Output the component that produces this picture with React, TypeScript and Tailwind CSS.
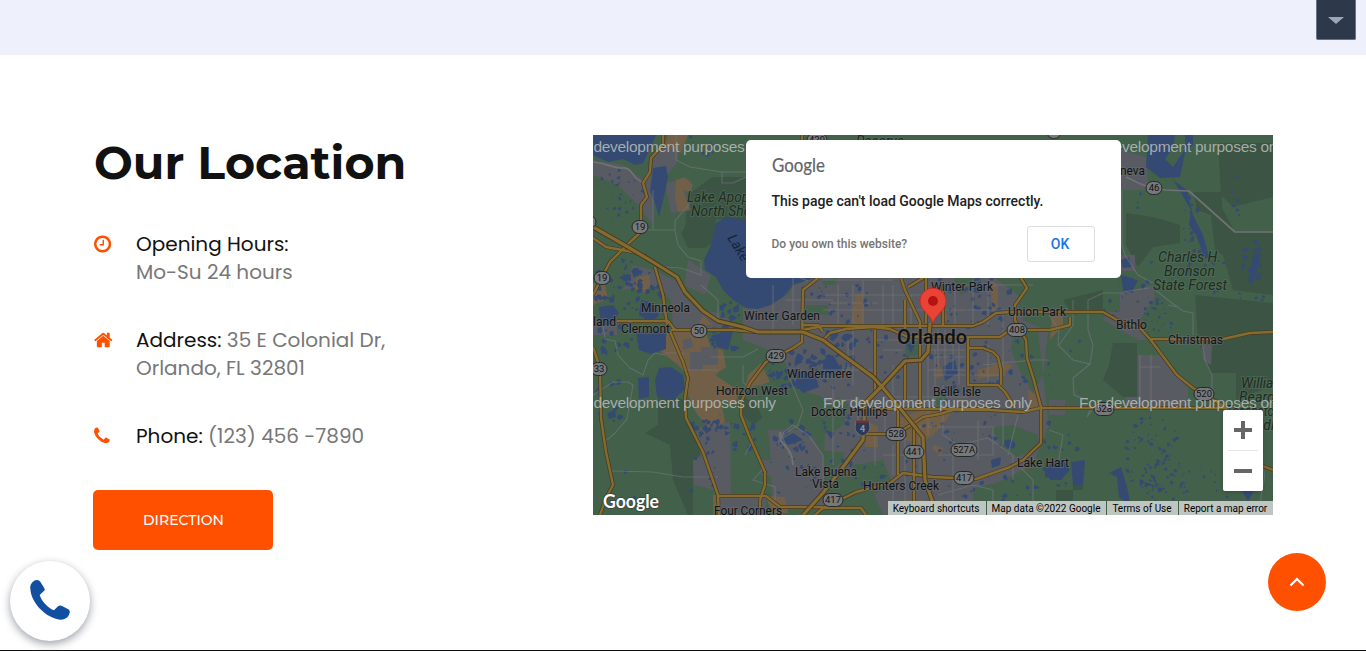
import type { ReactNode } from "react";

const BLUE = "#344a73";
const GREEN = "#43604b";
const DARK = "#3c5444";
const GRAY = "#595b62";
const SAND = "#715f47";

const ICONS = {
  clock:
    "M896 544v448q0 14-9 23t-23 9h-320q-14 0-23-9t-9-23v-64q0-14 9-23t23-9h224v-352q0-14 9-23t23-9h64q14 0 23 9t9 23zm416 352q0-148-73-273t-198-198-273-73-273 73-198 198-73 273 73 273 198 198 273 73 273-73 198-198 73-273zm224 0q0 209-103 385.5t-279.5 279.5-385.5 103-385.5-103-279.5-279.5-103-385.5 103-385.5 279.5-279.5 385.5-103 385.5 103 279.5 279.5 103 385.5z",
  home: "M1408 992v480q0 26-19 45t-45 19h-384v-384h-256v384h-384q-26 0-45-19t-19-45v-480q0-1 .5-3t.5-3l575-474 575 474q1 2 1 6zm223-69l-62 74q-8 9-21 11h-3q-13 0-21-7l-692-577-692 577q-12 8-24 7-13-2-21-11l-62-74q-8-10-7-23.5t11-21.5l719-599q32-26 76-26t76 26l244 204v-195q0-14 9-23t23-9h192q14 0 23 9t9 23v408l219 182q10 8 11 21.5t-7 23.5z",
  phone:
    "M1408 1240q0 27-10 70.5t-21 68.5q-21 50-122 106-94 51-186 51-27 0-53-3.5t-57.5-12.5-47-14.5-55.5-20.5-49-18q-98-35-175-83-127-79-264-216t-216-264q-48-77-83-175-3-9-18-49t-20.5-55.5-14.5-47-12.5-57.5-3.5-53q0-92 51-186 56-101 106-122 25-11 68.5-21t70.5-10q14 0 21 3 18 6 53 76 11 19 30 54t35 63.5 31 53.5q3 4 17.5 25t21.5 35.5 7 28.5q0 20-28.5 50t-62 55-62 53-28.5 46q0 9 5 22.5t8.5 20.5 14 24 11.5 19q76 137 174 235t235 174q2 1 19 11.5t24 14 20.5 8.5 22.5 5q18 0 46-28.5t53-62 55-62 50-28.5q14 0 28.5 7t35.5 21.5 25 17.5q25 15 53.5 31t63.5 35 54 30q70 35 76 53 3 7 3 21z",
};

// cx, cy, rx, ry, count, size
const PONDS: [number, number, number, number, number, number][] = [
  [30, 60, 28, 26, 34, 1.4], [25, 150, 25, 30, 32, 2.4], [45, 150, 30, 28, 22, 2.6],
  [20, 205, 22, 18, 14, 2.6], [20, 265, 18, 22, 12, 2.4], [130, 205, 14, 14, 14, 3],
  [120, 292, 24, 8, 26, 2.2], [120, 315, 18, 40, 18, 1.4], [150, 300, 14, 18, 12, 2.2],
  [200, 235, 26, 24, 30, 3], [205, 300, 24, 24, 18, 2.5], [200, 340, 34, 20, 14, 1.8],
  [255, 180, 28, 38, 24, 2], [245, 225, 18, 34, 24, 3], [300, 215, 30, 30, 18, 2],
  [360, 230, 26, 45, 34, 2.3], [385, 165, 36, 28, 28, 2.4], [350, 160, 14, 20, 8, 2.4],
  [415, 225, 26, 36, 20, 1.9], [250, 300, 24, 34, 22, 2], [290, 330, 34, 28, 18, 1.6],
  [370, 300, 46, 28, 26, 1.7], [400, 355, 48, 18, 18, 2], [468, 315, 22, 44, 16, 1.8],
  [475, 235, 20, 50, 12, 1.3], [565, 182, 14, 30, 36, 1.3], [530, 170, 24, 26, 12, 1.6],
  [560, 320, 28, 42, 76, 1.6], [575, 350, 28, 26, 44, 1.3], [600, 100, 10, 46, 34, 1.9],
  [645, 60, 6, 22, 10, 1.5], [660, 125, 12, 24, 18, 2.4], [625, 140, 16, 18, 8, 1.5],
  [550, 140, 24, 14, 8, 1.5], [660, 160, 14, 10, 8, 1.6], [610, 350, 30, 24, 14, 1.3],
  [80, 340, 60, 34, 8, 2], [105, 12, 20, 12, 10, 1.4], [140, 175, 12, 10, 8, 3],
  [545, 60, 8, 16, 6, 1.3], [220, 155, 14, 10, 10, 1.8],
];

function scatter(): string {
  let seed = 77;
  const rnd = () => {
    seed = (seed * 16807) % 2147483647;
    return seed / 2147483647;
  };
  let d = "";
  for (const [cx, cy, rx, ry, n, s] of PONDS) {
    for (let i = 0; i < n; i++) {
      const a = rnd() * Math.PI * 2;
      const r = Math.sqrt(rnd());
      const x = cx + Math.cos(a) * rx * r;
      const y = cy + Math.sin(a) * ry * r;
      const k = s * (0.4 + rnd() * 1.1);
      for (let j = 0; j < 6; j++) {
        const b = (j / 6) * Math.PI * 2;
        const q = k * (0.45 + rnd() * 0.9);
        d += (j ? "L" : "M") + (x + Math.cos(b) * q).toFixed(1) + " " + (y + Math.sin(b) * q).toFixed(1);
      }
      d += "Z";
    }
  }
  return d;
}
const PONDS_PATH = scatter();

const MINOR = [
  "M83 0V25L97 32L129 37V48H140L153 42", "M129 37H153",
  "M60 55V95M48 95H82L85 110L95 122L108 126V140L88 133L70 132", "M82 95V86L97 68", "M108 150L125 165V185",
  "M10 190L12 204L22 206L25 220L37 233L50 240L55 225L62 218L72 220", "M0 260L20 247H35L40 250L38 262L34 284L22 298L14 305",
  "M18 336L60 337L90 342H125", "M72 218H90V235H125M118 222H150L165 214", "M150 230V247L162 260M195 240L210 275L205 290L190 300L185 310",
  "M187 297L195 315L200 330M187 300L200 290L215 300L230 320V350", "M152 320L160 305L150 290", "M170 334L160 345L182 352V372",
  "M230 145H300M230 160H330M230 175H420M260 150V250M300 150V195M270 145V190M245 150V190M237 168H285M290 150V190M318 160V190M362 150V190",
  "M335 207H372M335 215H372M340 222H372M345 195V230M352 195V240M360 200V235M366 200V250M335 235H375M340 240H412",
  "M230 235H282M240 250V330M255 205V240M230 265H270M300 230V275M290 262H375M335 255V300M350 250V300M335 195V290M342 215V270M375 265V275",
  "M335 292H400V320H345M350 300L365 310L395 303L420 320V345M385 285V325M410 278V310M425 280L415 320M360 320V375M345 360L380 350L400 355V380",
  "M300 310V340M282 300V330M312 300V378M327 290V340M290 320H320M292 278V300M300 355V380M282 205H327M290 215H310M265 262V300M395 210V250",
  "M380 145V190M395 150V190M345 150H440M410 180V235M390 230L440 225H456",
  "M456 180L466 195L465 210L480 225L497 229L500 210L495 195V165L510 158H530", "M480 165V190L466 210M497 229L480 243L481 260L495 265",
  "M530 157L555 153M560 153L575 165L590 176L600 178V200M609 205L612 225L619 240V262M575 170L585 172",
  "M547 220V270M558 220V270M547 232H567", "M497 275L494 282L500 274", "M529 55V110L532 120L545 140L560 148",
  "M670 331C675 350 665 350 668 380", "M200 190V140L215 146M180 150V200M192 165H240", "M425 330L440 345V380M456 295L470 300L465 330",
];

const ARTERIAL = ["M0 27C15 28 20 34 30 33S40 46 50 47", "M533 42L550 50L572 55L596 56L642 97H680", "M187 297C185 312 200 310 200 330"];

const MAJOR = [
  "M62 132L70 160L74 190", "M70 0V10L58 23L57 37L50 48L54 62L48 70V97L37 107L17 127L10 140L0 160", "M0 103L13 112L40 117L55 122",
  "M24 186H75L82 195", "M78 195H140L165 197H200L230 191H380L390 187L403 178L417 177H510L524 185L547 193L557 204H630L657 198L680 197",
  "M209 0V5M225 143L210 155L209 207L200 213L187 220L173 227L157 248L148 267V280L157 303L172 337V350L167 365V380",
  "M77 196L90 227L95 243L92 263L93 283L110 317L125 360L126 380", "M0 212L7 233L8 283L13 317L20 350L13 363L7 380",
  "M125 361H173L187 372H230", "M230 205L237 198L253 194L280 192L297 194L315 202H407L417 195L457 195L477 190V182",
  "M282 195V258", "M312 165V195M312 225V265", "M305 275V340", "M321 290V380", "M350 150V190", "M375 202V250H405L412 257L422 273",
  "M375 213H390L400 217L405 222L408 235V250", "M308 143L312 155L327 187V275", "M333 143V188", "M315 152L325 146L330 143", "M263 274H397",
  "M557 204L584 240L600 253L624 267L634 274", "M670 331L680 335", "M230 197L225 190L209 190",
  "M428 143L434 153L422 170V185L427 195L433 205L434 223L440 242L448 272V308L430 325L417 332L383 344L340 342L310 338L297 348L263 357L253 362L230 373L222 380",
  "M270 299H303L318 290L330 282L347 279L360 275H397L430 277L447 273H634", "M230 373H268L273 380",
];
const HIGHWAY = [
  "M0 92L35 112L60 127L84 142L92 157L110 176L125 186L150 192L165 197L210 197L230 205L250 220L280 242L290 253L310 277L330 302L332 345L340 368L345 380",
  "M337 188L335 217L328 225L312 226L288 252L272 268L270 305L250 332L230 358L210 380",
];

type LabelSpec = [string, number, number, number];
const LABELS: LabelSpec[] = [
  ["Minneola", 48, 176.5, 49], ["Clermont", 28, 197.5, 49], ["Winter Garden", 151, 184.5, 76], ["land", 0, 190.5, 23],
  ["Horizon West", 123, 259.5, 72], ["Windermere", 194, 242.5, 65], ["Winter Park", 338, 155.5, 62], ["Union Park", 415, 180.5, 58],
  ["Bithlo", 523, 193.5, 31], ["Christmas", 575, 208.5, 55], ["Belle Isle", 340, 260.5, 48], ["Doctor Phillips", 218, 280.5, 77],
  ["Lake Buena", 202, 340.5, 62], ["Vista", 219, 352.5, 27], ["Hunters Creek", 270, 354.5, 76], ["Lake Hart", 424, 331.5, 52],
  ["Four Corners", 121, 379.5, 68], ["neva", 527, 39.5, 25],
];
const PARKS: LabelSpec[] = [
  ["Lake Apopka", 94, 66.5, 76], ["North Shore", 98, 80.5, 72], ["Reserve", 263, 10.5, 48], ["Charles H.", 565, 126.5, 63],
  ["Bronson", 571, 140.5, 51], ["State Forest", 560, 154.5, 74], ["William", 648, 252.5, 44], ["Beardall", 646, 266.5, 50],
  ["Tosohatchee", 633, 280.5, 66], ["Wildlife", 652, 294.5, 44],
];
const SHIELDS: [string, number, number, number][] = [
  ["19", 47, 92, 16], ["19", 9, 143, 16], ["33", 6, 234, 16], ["50", 106, 196, 16], ["429", 183, 221, 20], ["429", 224, 5, 20],
  ["408", 424, 195, 20], ["528", 303, 299, 20], ["441", 321, 317, 20], ["527A", 371, 315, 26], ["417", 371, 343, 20],
  ["417", 240, 365, 20], ["520", 611, 259, 20], ["528", 511, 274, 20], ["46", 561, 53, 16], ["", 461, -3, 14], ["", -5, 87, 16],
];

function Labels({ items, italic = false }: { items: LabelSpec[]; italic?: boolean }) {
  return (
    <g
      fontFamily="Roboto, sans-serif"
      fontSize={italic ? 14 : 12.4}
      fontStyle={italic ? "italic" : "normal"}
      fill={italic ? "#202b23" : "#111214"}
      stroke={italic ? "#56705d" : "#6b6d70"}
      strokeOpacity={0.6}
      strokeWidth={2}
      paintOrder="stroke"
    >
      {items.map(([t, x, y, w]) => (
        <text key={t} x={x} y={y} textLength={w} lengthAdjust="spacingAndGlyphs">{t}</text>
      ))}
    </g>
  );
}

function MapCanvas() {
  return (
    <svg className="block h-[380px] w-[680px]" viewBox="0 0 680 380">
      <rect width="680" height="380" fill={GREEN} />
      <g fill={DARK}>
        <path d="M95 60L108 50L120 42H153V85L123 84L120 107L112 113H95L88 98L92 92Z" />
        <path d="M65 258L92 265L95 290L110 318L100 325V380H95L80 345L77 310L52 298L65 290Z" />
        <path d="M600 57H629V73L642 97H680V160L640 155L630 120L622 115L618 80L604 75Z" />
        <path d="M625 8H680V62L640 72L628 60Z" />
        <path d="M533 78L560 82L587 90V108L560 112L545 132L533 110Z" />
        <path d="M602 160L680 168V250L643 265V238H618L605 205Z" />
        <path d="M520 208H544V262H530L510 245L516 230Z" />
        <path d="M470 165L510 155V175L480 180ZM463 355H490V345L480 340V380H463ZM145 258L175 278L160 290L150 280Z" />
      </g>
      <g fill={GRAY}>
        <path d="M0 25L30 30L50 45L62 20L80 0H88L84 28L60 55V90L45 70L25 50L0 40Z" />
        <path d="M72 48L90 45L98 75L78 78Z" />
        <path d="M150 172L195 160L205 143L262 140L400 142L425 160L430 185L455 196L450 240L456 290L440 330L400 350L395 380H290L275 345L230 330L232 300L240 280L230 262L205 255L188 220L150 205Z" />
        <path d="M175 295H215L230 320L232 370L180 372L178 340H168V325H178Z" />
        <path d="M103 293L137 287L138 362L173 361V380H126L122 355L101 350L100 325L108 322Z" />
        <path d="M30 155L60 150L78 165L80 192L100 196H150L128 178L105 175L90 160L95 125L118 140L112 160L60 135L40 130Z" />
        <path d="M527 158L560 150L562 162L547 185L553 205H545L510 185L515 177H527Z" />
        <path d="M545 220H567L595 253V273H533V262H545ZM609 210H619L618 230L610 225ZM528 15L553 22L556 55H528ZM528 120H542V136H528Z" />
        <path d="M456 265H472V280H456ZM90 215H125V240H95ZM0 185H24V200H0Z" />
      </g>
      <g fill={SAND}>
        <path d="M72 10L88 18L95 0H75Z M83 45L92 42L100 50L97 58L90 55L97 75L85 77L82 62Z" />
        <path d="M75 196H112L118 212L130 215L133 232L122 240L145 255L143 270L128 265L132 288L115 292L103 278L95 260V240L85 230L68 217Z" />
        <path d="M0 148L12 150L15 164L0 170ZM43 143L57 139V158L43 156ZM110 180L120 190H105ZM155 240L168 228L177 247L168 250L152 253ZM262 160L270 158V190H259Z" />
        <path d="M305 283L330 275H360L350 290L340 300L325 310L305 302ZM272 285L285 292V312H272ZM340 310L350 313L348 320L340 315Z" />
        <path d="M350 168L355 185L350 188ZM385 235L408 228L420 230L410 240L385 244ZM397 143L405 150V172L399 176ZM457 145L468 150L465 160L457 162ZM460 168L470 180V190L457 205Z" />
        <path d="M172 361L192 362L195 378H180ZM120 360H126V380H120ZM345 225L350 240L342 245ZM310 365H330V380H310ZM435 255L447 262V273H436Z" />
      </g>
      <g fill={GRAY}>
        <path d="M97 217H108V212H125V230H110V235H97ZM90 205L98 203L100 212L90 215Z" />
      </g>
      <g fill={GREEN}>
        <path d="M120 198L145 200L150 215L160 235L145 240L135 215ZM160 260L175 250L205 260L208 285L195 295L175 295L168 280ZM230 277L245 262L256 270L250 290L235 300ZM230 315L252 318L248 328L232 340ZM260 330L290 325L300 350L275 362L262 350ZM340 260L348 255L355 265L345 272ZM398 293L420 290L445 300V312L425 322L412 315ZM420 200L445 195L450 240L440 258L428 238L418 215ZM427 145H470V175H425ZM380 353L440 340L450 380H380ZM312 203L325 205V220L312 222ZM230 145L245 143L242 150H230ZM360 143H380V152L368 160ZM213 170H235V180H213Z" />
      </g>
      <g fill={BLUE}>
        <path d="M123 88L133 82L155 85L200 95L222 143L200 150L190 162L178 170L165 174L153 173L140 165L130 155L123 142L112 135L111 125L118 110Z" />
        <path d="M0 0H63L57 14L50 28L42 30L30 24L15 27L0 20ZM60 33L73 31L75 42L70 66L66 82L62 68L57 56Z" />
        <path d="M43 197L73 196L73 214L58 219L46 215ZM66 233L78 232L90 240L92 254L80 265L64 262L62 245ZM45 243L56 242V262L46 264ZM48 165L60 168L66 180L58 188L46 180ZM6 172L20 170L26 178L18 190H8ZM120 200L140 196L135 215L124 212ZM14 278L22 275L23 282L16 284Z" />
        <path d="M555 0H600V10L592 18L587 42L567 43L553 32ZM580 45L594 55L600 80L610 100L616 122L612 124L603 100L596 90L598 75L588 58Z" />
        <path d="M457 329L470 325L477 335L468 345H457ZM478 327L492 325L490 350L480 350ZM516 338L528 332L534 352L538 372L526 362L524 342ZM530 145H545L540 155L530 157ZM528 140L542 144L540 158L530 155ZM660 120L668 118L662 142H656ZM645 340L662 355L655 366L648 355Z" />
        <path d="M205 236L222 240L226 252L210 258L202 250ZM188 305L200 298L210 305L195 310ZM230 225L240 220L246 230L238 240L230 235ZM350 232L362 225L365 238L352 246ZM412 305C418 303 424 307 422 312C416 317 409 311 412 305ZM398 325L408 322L407 330L399 333ZM380 150L388 146L386 158L380 157ZM452 330H460V344L452 342ZM232 295L242 298L238 304ZM312 207L322 210L318 218ZM528 125L536 122L539 132L530 133Z" />
        <path d={PONDS_PATH} />
      </g>
      <path d="M582 0H592V14L580 32L572 24L580 12Z" fill={GREEN} />
      <g fill="none" stroke="#75787c" strokeOpacity={0.6} strokeWidth={1.1}>
        {MINOR.map((d) => <path key={d} d={d} />)}
      </g>
      <g fill="none" stroke="#707273" strokeWidth={1.7} strokeLinejoin="round">
        {ARTERIAL.map((d) => <path key={d} d={d} />)}
      </g>
      <g fill="none" strokeLinejoin="round">
        {MAJOR.map((d) => <path key={d} d={d} stroke="#47391d" strokeWidth={3.8} />)}
        {MAJOR.map((d) => <path key={d + "f"} d={d} stroke="#866b30" strokeWidth={2.4} />)}
        {HIGHWAY.map((d) => <path key={d} d={d} stroke="#47391d" strokeWidth={5} />)}
        {HIGHWAY.map((d) => <path key={d + "f"} d={d} stroke="#866b30" strokeWidth={3.2} />)}
      </g>
      <g fontFamily="Roboto, sans-serif" fontSize="9.5" textAnchor="middle" fill="#101214">
        {SHIELDS.map(([t, x, y, w]) => (
          <g key={t + x}>
            <rect x={x - w / 2} y={y - 6.5} width={w} height={13} rx={6.5} fill="#76787a" stroke="#24272a" />
            <text x={x} y={y + 3.4}>{t}</text>
          </g>
        ))}
        <path d="M263 286H276L277 293Q276 299 269.5 301Q263 299 262 293Z" fill="#2b3b57" stroke="#777b82" strokeWidth=".7" />
        <path d="M263 285.500H276V288H263Z" fill="#653536" />
        <text x="269.500" y="297" fill="#8b929c" fontWeight="700">4</text>
      </g>
      <Labels items={LABELS} />
      <Labels items={PARKS} italic />
      <text transform="translate(134 103) rotate(58)" fontFamily="Roboto, sans-serif" fontStyle="italic" fontSize="14" fill="#18233c">Lake</text>
      <text x="304" y="209" textLength="70" fontFamily="Roboto, sans-serif" fontSize="20" fontWeight="500" fill="#101114" stroke="#6b6d70" strokeWidth="2" strokeOpacity=".6" paintOrder="stroke">Orlando</text>
      <g fontFamily="Liberation Sans, Arial, sans-serif" fontSize="15.500" fill="#b5bab8" fillOpacity=".88">
        {[17, 273].map((y) =>
          [-26, 230, 486].map((x) => (
            <text key={`${x}-${y}`} x={x} y={y} textLength="209">For development purposes only</text>
          )),
        )}
      </g>
      <path d="M340 189.500C339 180 327 176 327 166A13 13 0 0 1 353 166C353 176 341 180 340 189.500Z" fill="#ea4335" stroke="#c5221f" strokeWidth=".7" />
      <circle cx="340" cy="166" r="5" fill="#b31412" />
      <text x="10" y="372.500" textLength="56" lengthAdjust="spacingAndGlyphs" fontFamily="Lato, sans-serif" fontSize="19" fontWeight="700" fill="#fff" stroke="#333" strokeOpacity=".5" strokeWidth="2" paintOrder="stroke">Google</text>
    </svg>
  );
}

function InfoRow({ icon, box, children }: { icon: string; box: string; children: ReactNode }) {
  return (
    <li className="flex">
      <span className="flex h-7 w-[43px] shrink-0 items-center pl-px">
        <svg className="h-5 w-auto" viewBox={box} fill="#ff5000"><path d={icon} /></svg>
      </span>
      <p className="whitespace-nowrap font-['Poppins','Inter',sans-serif] text-[20px] leading-7 text-[#777]">{children}</p>
    </li>
  );
}

export default function App() {
  return (
    <div className="relative flex h-[651px] w-full flex-col overflow-hidden bg-white">
      <div className="h-[55px] shrink-0 bg-[#eef1fb]" />
      <main className="flex flex-1 pl-[93px] pt-20">
        <section className="w-[500px]">
          <h2 className="whitespace-nowrap pl-px font-['Montserrat','Inter',sans-serif] text-[46px] font-bold leading-[56px] text-[#111]">Our Location</h2>
          <ul className="mt-[39px] flex flex-col gap-10">
            <InfoRow icon={ICONS.clock} box="0 0 1536 1792">
              <span className="text-[#111]">Opening Hours:</span><br />Mo-Su 24 hours
            </InfoRow>
            <InfoRow icon={ICONS.home} box="0 0 1664 1792">
              <span className="text-[#111]">Address:</span> 35 E Colonial Dr,<br />Orlando, FL 32801
            </InfoRow>
            <InfoRow icon={ICONS.phone} box="0 0 1408 1792">
              <span className="text-[#111]">Phone:</span> (123) 456 -7890
            </InfoRow>
          </ul>
          <button className="mt-10 h-[60px] w-[180px] rounded-[5px] bg-[#ff5000] pl-px font-['Montserrat','Inter',sans-serif] text-[14px] font-medium text-white">DIRECTION</button>
        </section>

        <section className="relative h-[380px] w-[680px] overflow-hidden">
          <MapCanvas />
          <div className="absolute left-[153px] top-[5px] flex h-[138px] w-[375px] flex-col rounded-[5px] bg-white pl-[25.5px] pr-[26px] font-['Roboto',sans-serif]">
            <svg className="mt-[14px] h-6 w-14 shrink-0" viewBox="0 0 56 24">
              <text x="0" y="17.500" textLength="53" lengthAdjust="spacingAndGlyphs" fontFamily="Lato, sans-serif" fontSize="18.500" fill="#5f6368" stroke="#5f6368" strokeWidth=".2">Google</text>
            </svg>
            <p className="mt-[13px] whitespace-nowrap text-[14px] font-medium leading-5 text-[#212121]">This page can't load Google Maps correctly.</p>
            <div className="mt-[15px] flex items-center justify-between">
              <span className="text-[12px] font-medium text-[#757575]">Do you own this website?</span>
              <button className="h-9 w-[68px] rounded-[3px] border border-[#dadce0] pr-[2px] text-[14px] font-medium text-[#1a73e8]">OK</button>
            </div>
          </div>
          <div className="absolute bottom-6 right-[10px] flex h-[81px] w-10 flex-col items-center rounded-[2px] bg-white shadow-[0_1px_4px_-1px_rgba(0,0,0,0.3)]">
            <svg className="h-10 w-10" viewBox="0 0 40 40"><path d="M18 11h4v7h7v4h-7v7h-4v-7h-7v-4h7z" fill="#666" /></svg>
            <div className="h-px w-[30px] bg-[#e6e6e6]" />
            <svg className="h-10 w-10" viewBox="0 0 40 40"><path d="M11 18h18v4H11z" fill="#666" /></svg>
          </div>
          <div className="absolute bottom-0 right-0 flex h-[14px] gap-px whitespace-nowrap font-['Roboto',sans-serif] text-[10px] leading-[15px] text-black">
            <span className="w-[98px] bg-[#bfc6c1] pr-[2px] text-center">Keyboard shortcuts</span>
            <span className="w-[119px] bg-[#bfc6c1] pr-px text-center">Map data ©2022 Google</span>
            <span className="w-[71px] bg-[#bfc6c1] pr-px text-center">Terms of Use</span>
            <span className="w-[94px] bg-[#bfc6c1] pr-px text-center">Report a map error</span>
          </div>
        </section>
      </main>
      <div className="h-px shrink-0 bg-[#111]" />

      <div className="absolute right-[10px] top-0 flex h-10 w-10 items-center justify-center rounded-b-[2px] border border-t-0 border-[#697386] bg-[#2d384b] pt-[2px]">
        <svg className="h-[7px] w-4" viewBox="0 0 16 7"><path d="M0 0h16L8 7z" fill="#9ca8ba" /></svg>
      </div>
      <button className="absolute bottom-[10px] left-[10px] flex h-20 w-20 items-center justify-center rounded-full bg-white pb-[3px] shadow-[0_3px_8px_rgba(10,20,40,0.4)]">
        <svg className="h-10 w-10" viewBox="90 298 120 120">
          <path d="M91 325C89 315 96 303 106 299Q116 296 121 303L133 323Q136 328 131 332L119 343C125 362 143 381 162 389L174 377Q180 372 186 376L205 386Q211 390 209 397C205 412 192 418 181 417C140 413 94 369 91 325Z" fill="#134fa0" />
        </svg>
      </button>
      <button className="absolute bottom-10 right-10 flex h-[58px] w-[58px] items-center justify-center rounded-full bg-[#ff5000]">
        <svg className="h-4 w-4" viewBox="0 0 16 16"><path d="M1.500 11.500L8 5L14.500 11.500" fill="none" stroke="#fff" strokeWidth="2.200" /></svg>
      </button>
    </div>
  );
}
